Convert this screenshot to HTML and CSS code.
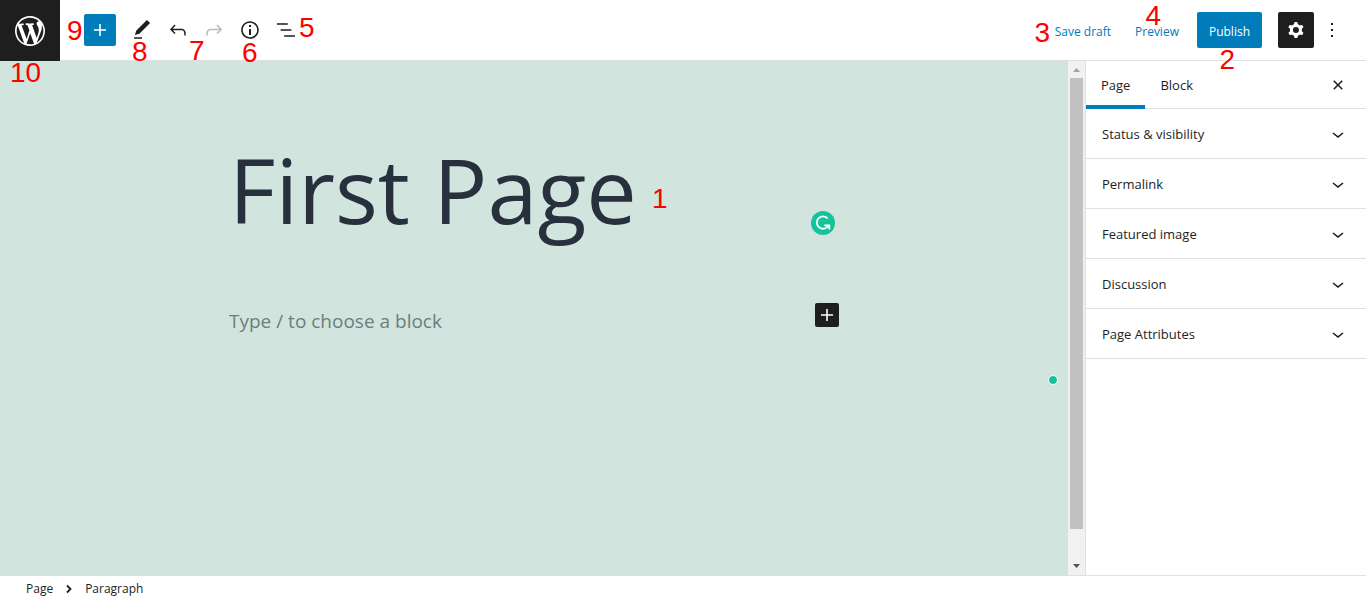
FILE: index.html
```html
<!DOCTYPE html>
<html lang="en">
<head>
<meta charset="utf-8">
<title>Edit Page</title>
<link rel="stylesheet" href="styles.css">
</head>
<body>
<div class="editor">
  <header class="topbar">
    <a class="home" href="#" aria-label="View pages">
      <svg width="36" height="36" viewBox="-2 -2 24 24"><path d="M20 10c0-5.51-4.49-10-10-10C4.48 0 0 4.49 0 10c0 5.52 4.48 10 10 10 5.51 0 10-4.48 10-10zM7.78 15.37L4.37 6.22c.55-.02 1.17-.08 1.17-.08.5-.06.44-1.13-.06-1.11 0 0-1.45.11-2.37.11-.18 0-.37 0-.58-.01C4.12 2.69 6.87 1.11 10 1.11c2.33 0 4.45.87 6.05 2.34-.68-.11-1.65.39-1.65 1.58 0 .74.45 1.36.9 2.1.35.61.55 1.36.55 2.46 0 1.49-1.4 5-1.4 5l-3.03-8.37c.54-.02.82-.17.82-.17.5-.05.44-1.25-.06-1.22 0 0-1.44.12-2.38.12-.87 0-2.33-.12-2.33-.12-.5-.03-.56 1.2-.06 1.22l.92.08 1.26 3.41zM17.41 10c.24-.64.74-1.87.43-4.25.7 1.29 1.05 2.71 1.05 4.25 0 3.29-1.73 6.24-4.4 7.78.97-2.59 1.94-5.2 2.92-7.78zM6.1 18.09C3.12 16.65 1.11 13.53 1.11 10c0-1.3.23-2.48.72-3.59C3.25 10.3 4.67 14.2 6.1 18.09zm4.03-6.63l2.58 6.98c-.86.29-1.76.45-2.71.45-.79 0-1.57-.11-2.29-.33.81-2.38 1.62-4.74 2.42-7.1z"/></svg>
    </a>
    <div class="tools">
      <button class="inserter" aria-label="Add block"><svg width="24" height="24" viewBox="0 0 24 24"><path d="M18 11.2h-5.2V6h-1.6v5.2H6v1.6h5.2V18h1.6v-5.2H18z"/></svg></button>
      <div class="tool-group">
        <button class="tool" aria-label="Tools"><svg width="24" height="24" viewBox="0 0 24 24"><path d="M20.1 5.1L16.9 2 6.2 12.7l-1.3 4.4 4.5-1.3L20.1 5.1zM4 20.8h8v-1.5H4v1.5z"/></svg></button>
        <button class="tool" aria-label="Undo"><svg width="24" height="24" viewBox="0 0 24 24"><path d="M18.3 11.7c-.6-.6-1.4-.9-2.3-.9H6.7l2.9-3.3-1.1-1-4.5 5L8.5 16l1-1-2.7-2.7H16c.5 0 .9.2 1.3.5 1 1 1 3.4 1 4.5v.3h1.5v-.2c0-1.5 0-4.3-1.5-5.7z"/></svg></button>
        <button class="tool" aria-label="Redo" disabled><svg width="24" height="24" viewBox="0 0 24 24"><path d="M15.6 6.5l-1.1 1 2.9 3.3H8c-.9 0-1.7.3-2.3.9-1.4 1.5-1.4 4.2-1.4 5.6v.2h1.5v-.3c0-1.1 0-3.5 1-4.5.3-.3.7-.5 1.3-.5h9.2L14.5 15l1.1 1.1 4.6-4.6-4.6-5z"/></svg></button>
        <button class="tool" aria-label="Details"><svg width="24" height="24" viewBox="0 0 24 24"><path d="M12 3.2c-4.8 0-8.8 3.9-8.8 8.8 0 4.8 3.9 8.8 8.8 8.8 4.8 0 8.8-3.9 8.8-8.8 0-4.8-4-8.8-8.8-8.8zm0 16c-4 0-7.2-3.3-7.2-7.2C4.8 8 8 4.8 12 4.8s7.2 3.3 7.2 7.2c0 4-3.2 7.2-7.2 7.2zM11 17h2v-6h-2v6zm0-8h2V7h-2v2z"/></svg></button>
        <button class="tool" aria-label="List view"><svg width="24" height="24" viewBox="0 0 24 24"><path d="M13.8 5.2H3v1.5h10.8V5.2zm-3.6 12v1.5H21v-1.5H10.2zm7.2-6H6.6v1.5h10.8v-1.5z"/></svg></button>
      </div>
    </div>
    <div class="actions">
      <button class="text-button">Save draft</button>
      <button class="text-button">Preview</button>
      <button class="publish">Publish</button>
      <button class="tool settings" aria-label="Settings"><svg width="24" height="24" viewBox="0 0 24 24"><path fill-rule="evenodd" d="M10.289 4.836A1 1 0 0111.275 4h1.306a1 1 0 01.987.836l.244 1.466c.787.26 1.503.679 2.108 1.218l1.393-.522a1 1 0 011.216.437l.653 1.13a1 1 0 01-.23 1.273l-1.148.944a6.025 6.025 0 010 2.435l1.149.946a1 1 0 01.23 1.272l-.653 1.13a1 1 0 01-1.216.437l-1.394-.522c-.605.54-1.32.958-2.108 1.218l-.244 1.466a1 1 0 01-.987.836h-1.306a1 1 0 01-.986-.836l-.244-1.466a5.995 5.995 0 01-2.108-1.218l-1.394.522a1 1 0 01-1.217-.436l-.653-1.131a1 1 0 01.23-1.272l1.149-.946a6.026 6.026 0 010-2.435l-1.148-.944a1 1 0 01-.23-1.272l.653-1.131a1 1 0 011.217-.437l1.393.522a5.994 5.994 0 012.108-1.218l.244-1.466zM14.929 12a3 3 0 11-6 0 3 3 0 016 0z"/></svg></button>
      <button class="tool" aria-label="Options"><svg width="24" height="24" viewBox="0 0 24 24"><path d="M13 19h-2v-2h2v2zm0-6h-2v-2h2v2zm0-6h-2V5h2v2z"/></svg></button>
    </div>
  </header>

  <div class="body">
    <main class="canvas">
      <div class="content">
        <div class="title-row">
          <input class="title" type="text" value="First Page" aria-label="Page title" spellcheck="false">
          <svg class="checker" width="24" height="24" viewBox="0 0 24 24"><circle cx="12" cy="12" r="12" fill="#15c39a"/><path d="M16.700 7.500A6.200 6.200 0 1 0 17.400 14.600M13.300 14.400h5v4" fill="none" stroke="#fff" stroke-width="1.800"/></svg>
        </div>
        <div class="block-row">
          <input class="paragraph" type="text" placeholder="Type / to choose a block" aria-label="Paragraph block">
          <button class="add-block" aria-label="Add block"><svg width="24" height="24" viewBox="0 0 24 24"><path d="M18 11.2h-5.2V6h-1.6v5.2H6v1.6h5.2V18h1.6v-5.2H18z"/></svg></button>
        </div>
      </div>
      <span class="status-dot"></span>
    </main>
    <div class="scrollbar" aria-hidden="true">
      <svg class="arrow-up" width="17" height="17" viewBox="0 0 17 17"><path d="M5 11h7L8.500 7z"/></svg>
      <div class="track"><div class="thumb"></div></div>
      <svg class="arrow-down" width="17" height="17" viewBox="0 0 17 17"><path d="M5 6h7L8.500 10z"/></svg>
    </div>
    <aside class="sidebar">
      <div class="tabs">
        <button class="tab active">Page</button>
        <button class="tab">Block</button>
        <button class="close" aria-label="Close settings"><svg width="24" height="24" viewBox="0 0 24 24"><path d="M12 13.06l3.712 3.713 1.061-1.06L13.061 12l3.712-3.712-1.06-1.06L12 10.938 8.288 7.227l-1.061 1.06L10.939 12l-3.712 3.712 1.06 1.061L12 13.061z"/></svg></button>
      </div>
      <button class="panel">Status &amp; visibility<svg width="24" height="24" viewBox="0 0 24 24"><path d="M17.5 11.6L12 16l-5.5-4.4.9-1.2L12 14l4.5-3.6 1 1.2z"/></svg></button>
      <button class="panel">Permalink<svg width="24" height="24" viewBox="0 0 24 24"><path d="M17.5 11.6L12 16l-5.5-4.4.9-1.2L12 14l4.5-3.6 1 1.2z"/></svg></button>
      <button class="panel">Featured image<svg width="24" height="24" viewBox="0 0 24 24"><path d="M17.5 11.6L12 16l-5.5-4.4.9-1.2L12 14l4.5-3.6 1 1.2z"/></svg></button>
      <button class="panel">Discussion<svg width="24" height="24" viewBox="0 0 24 24"><path d="M17.5 11.6L12 16l-5.5-4.4.9-1.2L12 14l4.5-3.6 1 1.2z"/></svg></button>
      <button class="panel">Page Attributes<svg width="24" height="24" viewBox="0 0 24 24"><path d="M17.5 11.6L12 16l-5.5-4.4.9-1.2L12 14l4.5-3.6 1 1.2z"/></svg></button>
    </aside>
  </div>

  <footer class="breadcrumb">
    <a href="#">Page</a>
    <svg width="8" height="10" viewBox="0 0 8 10"><path d="M2 1.500l3.500 3.500L2 8.500" fill="none" stroke="#1e1e1e" stroke-width="1.800"/></svg>
    <a href="#">Paragraph</a>
  </footer>

  <span class="mark mark-1">1</span>
  <span class="mark mark-2">2</span>
  <span class="mark mark-3">3</span>
  <span class="mark mark-4">4</span>
  <span class="mark mark-5">5</span>
  <span class="mark mark-6">6</span>
  <span class="mark mark-7">7</span>
  <span class="mark mark-8">8</span>
  <span class="mark mark-9">9</span>
  <span class="mark mark-10">10</span>
</div>
</body>
</html>
```
FILE: styles.css
```css
* { box-sizing: border-box; }

body {
  margin: 0;
  background: #fff;
  color: #1e1e1e;
  font: 13px/20px "Open Sans", "Noto Sans", sans-serif;
}

button, input {
  margin: 0;
  padding: 0;
  border: 0;
  background: none;
  color: inherit;
  font: inherit;
}

svg { display: block; flex: none; fill: currentColor; }

.editor {
  position: relative;
  display: flex;
  flex-direction: column;
  min-height: 100vh;
}

/* Top bar */
.topbar {
  display: flex;
  align-items: flex-start;
  height: 61px;
  border-bottom: 1px solid #e0e0e0;
}
.home {
  display: grid;
  place-items: center;
  width: 60px;
  height: 61px;
  background: #1e1e1e;
  color: #fff;
}
.tools, .actions { display: flex; align-items: center; height: 60px; }
.tools { gap: 8px; padding-left: 24px; }
.tool-group { display: flex; }
.inserter, .tool { display: grid; place-items: center; }
.inserter {
  width: 32px;
  height: 32px;
  border-radius: 2px;
  background: #007cba;
  color: #fff;
}
.tool { width: 36px; height: 36px; border-radius: 2px; }
.tool:disabled { opacity: 0.3; }
.actions { margin-left: auto; padding-right: 16px; }
.text-button, .publish {
  height: 36px;
  padding: 3px 12px 0;
  color: #007cba;
  font-size: 12px;
}
.publish {
  margin: 0 16px 0 6px;
  border-radius: 2px;
  background: #007cba;
  color: #fff;
}
.settings { background: #1e1e1e; color: #fff; }

/* Editing area */
.body { display: flex; flex: 1; }
.canvas {
  position: relative;
  flex: 1;
  padding-top: 64px;
  background: #d1e4dd;
}
.content { width: 100%; max-width: 610px; margin: 0 auto; }
.title-row { position: relative; }
.title {
  display: block;
  width: 100%;
  height: 128px;
  color: #28303d;
  font: 90px/128px "Open Sans", "Noto Sans", sans-serif;
}
.checker { position: absolute; right: 4px; top: 86px; }
.block-row { display: flex; align-items: center; padding-top: 50px; }
.paragraph {
  flex: 1;
  min-width: 0;
  height: 36px;
  font-size: 19px;
  line-height: 36px;
}
.paragraph::placeholder { color: #28303d; opacity: 0.58; }
.add-block {
  align-self: flex-start;
  border-radius: 2px;
  background: #1e1e1e;
  color: #fff;
}
.status-dot {
  position: absolute;
  right: 10px;
  top: 314px;
  width: 10px;
  height: 10px;
  border: 1px solid #fff;
  border-radius: 50%;
  background: #15c39a;
}

.scrollbar {
  display: flex;
  flex-direction: column;
  width: 17px;
  background: #f1f1f1;
}
.arrow-up { color: #a3a3a3; }
.arrow-down { color: #505050; }
.track { flex: 1; padding: 0 2px; }
.thumb { height: 94%; background: #c1c1c1; }

/* Settings sidebar */
.sidebar { width: 281px; border-left: 1px solid #e0e0e0; }
.tabs {
  display: flex;
  height: 48px;
  padding-right: 16px;
  border-bottom: 1px solid #e0e0e0;
}
.tab { height: 48px; padding: 0 15px; }
.tab.active { box-shadow: inset 0 -4px #007cba; }
.close { margin-left: auto; }
.panel {
  display: flex;
  align-items: center;
  justify-content: space-between;
  width: 100%;
  height: 50px;
  padding: 0 16px;
  border-bottom: 1px solid #e0e0e0;
  text-align: left;
}

/* Breadcrumb */
.breadcrumb {
  display: flex;
  align-items: center;
  gap: 12px;
  height: 25px;
  padding: 2px 26px 0;
  border-top: 1px solid #e0e0e0;
  font-size: 12px;
}
.breadcrumb a { color: inherit; text-decoration: none; }

/* Numbered callouts over the interface */
.mark {
  position: absolute;
  color: #f00;
  font: 28px/28px "Liberation Sans", Arial, sans-serif;
}
.mark-1 { left: 652px; top: 185px; }
.mark-2 { right: 131px; top: 46px; }
.mark-3 { right: 316px; top: 19px; }
.mark-4 { right: 205px; top: 2px; }
.mark-5 { left: 299px; top: 14px; }
.mark-6 { left: 242px; top: 39px; }
.mark-7 { left: 189px; top: 37px; }
.mark-8 { left: 132px; top: 38px; }
.mark-9 { left: 67px; top: 17px; }
.mark-10 { left: 10px; top: 59px; }
```
